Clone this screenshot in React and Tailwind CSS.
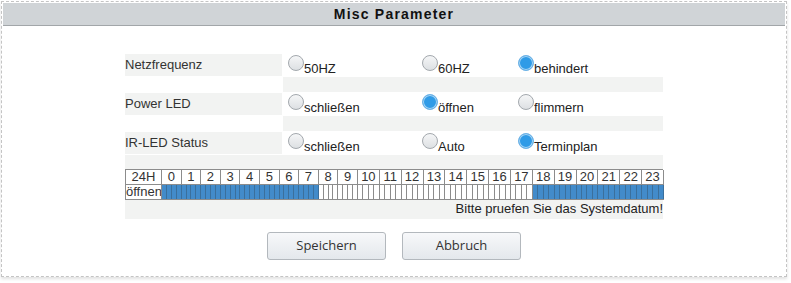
import React from 'react'

const sans = { fontFamily: '"Liberation Sans", Arial, sans-serif' }

const rows = [
  { label: 'Netzfrequenz', options: ['50HZ', '60HZ', 'behindert'], checked: 2 },
  { label: 'Power LED', options: ['schließen', 'öffnen', 'flimmern'], checked: 1 },
  { label: 'IR-LED Status', options: ['schließen', 'Auto', 'Terminplan'], checked: 2 },
]

const hours = Array.from({ length: 24 }, (_, i) => i)
const isOpen = (h) => h < 8 || h >= 18

const Radio = ({ label, checked }) => (
  <label className="flex items-start">
    <span
      className={
        checked
          ? 'mt-px w-[16px] h-[16px] rounded-full border border-[#6fb3e6] bg-[#2f9be7] shadow-[inset_0_0_0_1px_#a9d6f5]'
          : 'mt-px w-[16px] h-[16px] rounded-full border border-[#a3a8ad] bg-gradient-to-b from-[#f5f6f7] to-[#dde0e3]'
      }
    />
    <span className="mt-[7px] leading-[15px] text-[#222]">{label}</span>
  </label>
)

const Schedule = () => (
  <div className="flex border-t border-l border-[#8c8c8c] bg-white text-[13px] text-[#333]">
    <div className="w-[36px] flex-none flex flex-col">
      <div className="h-[15px] border-r border-b border-[#8c8c8c] text-center leading-[14px]">24H</div>
      <div className="h-[15px] border-r border-b border-[#8c8c8c] leading-[14px] overflow-hidden whitespace-nowrap">öffnen</div>
    </div>
    {hours.map((h) => (
      <div key={h} className={h < 10 ? 'w-[19.6px] flex-none flex flex-col' : 'w-[21.86px] flex-none flex flex-col'}>
        <div className="h-[15px] border-r border-b border-[#8c8c8c] text-center leading-[14px]">{h}</div>
        <div className="h-[15px] flex border-b border-[#8c8c8c]">
          {[0, 1, 2, 3].map((q) => (
            <div
              key={q}
              className={isOpen(h) ? 'flex-1 border-r border-[#3a6f9c] bg-[#428bca]' : 'flex-1 border-r border-[#8c8c8c] bg-white'}
            />
          ))}
        </div>
      </div>
    ))}
  </div>
)

export default function App() {
  return (
    <div className="w-[791px] h-[283px] bg-white" style={sans}>
      <div className="ml-px mt-px w-[786px] h-[276px] p-px border border-dashed border-[#c4c4c4] shadow-[0_2px_3px_rgba(0,0,0,0.12)] flex flex-col">
        <div className="h-[23px] bg-[#d0d4d7] border-b border-[#a2a6a9] flex items-center justify-center">
          <h2 className="text-[14px] font-bold tracking-[1.2px] text-[#111]">Misc Parameter</h2>
        </div>

        <div className="pt-[28px] w-[538px] mx-auto flex flex-col gap-px text-[13px] text-[#333]">
          {rows.map((r) => (
            <React.Fragment key={r.label}>
              <div className="flex gap-px h-[22px]">
                <div className="w-[157px] flex-none bg-[#f2f3f2] flex items-center">{r.label}</div>
                <div className="flex-1 flex pl-[5px]">
                  <div className="w-[134px]">
                    <Radio label={r.options[0]} checked={r.checked === 0} />
                  </div>
                  <div className="w-[96px]">
                    <Radio label={r.options[1]} checked={r.checked === 1} />
                  </div>
                  <div>
                    <Radio label={r.options[2]} checked={r.checked === 2} />
                  </div>
                </div>
              </div>
              {r.label !== 'IR-LED Status' && (
                <div className="flex gap-px h-[15px]">
                  <div className="w-[157px] flex-none" />
                  <div className="flex-1 bg-[#f2f3f2]" />
                </div>
              )}
            </React.Fragment>
          ))}
          <div className="bg-[#f2f3f2] pt-[14px] pb-[2px]">
            <Schedule />
            <p className="text-right text-[#222] leading-[17px]">Bitte pruefen Sie das Systemdatum!</p>
          </div>
        </div>

        <div className="mt-[13px] flex justify-center gap-[16px]" style={{ fontFamily: '"Open Sans", sans-serif' }}>
          <button className="w-[119px] h-[28px] rounded-[3px] border border-[#b3b8bd] bg-gradient-to-b from-[#f7f8fa] to-[#e4e8ec] text-[13px] text-[#333]">
            Speichern
          </button>
          <button className="w-[119px] h-[28px] rounded-[3px] border border-[#b3b8bd] bg-gradient-to-b from-[#f7f8fa] to-[#e4e8ec] text-[13px] text-[#333]">
            Abbruch
          </button>
        </div>
      </div>
    </div>
  )
}
